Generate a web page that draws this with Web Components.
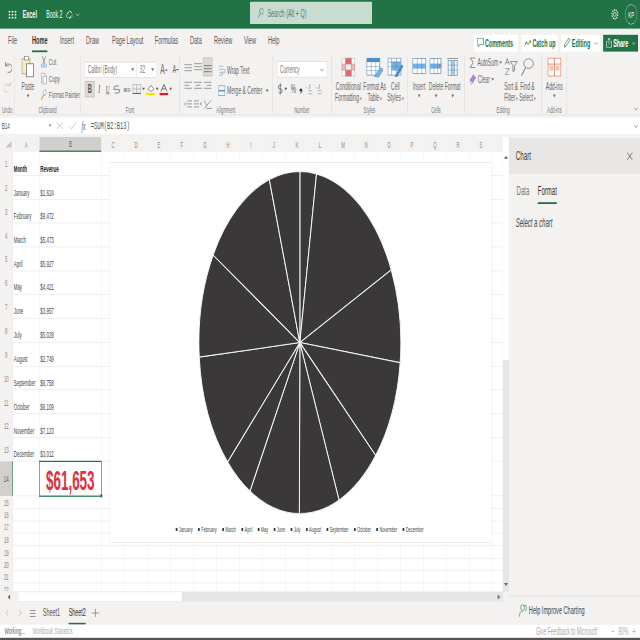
<!DOCTYPE html>
<html>
<head>
<meta charset="utf-8">
<title>Excel</title>
<style>
  html,body{margin:0;padding:0;overflow:hidden;background:#fff}
</style>
</head>
<body>
<excel-app></excel-app>
<script>
/* the reference is a 16:9 desktop squeezed into a square, so everything is
   laid out on a 2240x1067 sheet and squashed to 640x640 by excel-app.
   icons are drawn in final pixels: x-icon stretches them back */
const SX = 3.5, SY = 1.6667;
const GREEN = '#217346';

const ICONS = {
  waffle: '<g fill="#fff"><circle cx="1.5" cy="1.5" r=".9"/><circle cx="4.5" cy="1.5" r=".9"/><circle cx="7.5" cy="1.5" r=".9"/><circle cx="1.5" cy="4.5" r=".9"/><circle cx="4.5" cy="4.5" r=".9"/><circle cx="7.5" cy="4.5" r=".9"/><circle cx="1.5" cy="7.5" r=".9"/><circle cx="4.5" cy="7.5" r=".9"/><circle cx="7.5" cy="7.5" r=".9"/></g>',
  saved: '<path d="M2 8a2 2 0 0 1 .4-4A3 3 0 0 1 8 3.4 2.4 2.4 0 0 1 8 8" fill="none" stroke="#fff" stroke-width=".9"/><path d="M3.5 7.5l1.5 1.5 2.5-3" fill="none" stroke="#fff"/>',
  chev: '<path d="M1 2l2.5 2.5L6 2" fill="none" stroke="currentColor" stroke-width=".7"/>',
  tri: '<path d="M0 1h5L2.5 4z" fill="currentColor"/>',
  search: '<circle cx="7" cy="4.5" r="3.2" fill="none" stroke="#54715f" stroke-width=".8"/><path d="M4.7 7L1 11.5" stroke="#54715f" stroke-width=".8"/>',
  gear: '<circle cx="6" cy="6" r="2" fill="none" stroke="#fff" stroke-width=".8"/><circle cx="6" cy="6" r="4.4" fill="none" stroke="#fff" stroke-width="1.4" stroke-dasharray="1.7 1"/>',
  comment: '<path d="M.5.5h10v7H4l-2 2.5v-2.5H.5z" fill="none" stroke="#217346" stroke-width=".8"/>',
  catchup: '<path d="M1 7l2.5-4 1.5 3M6 6.5L9.5 2" fill="none" stroke="#217346" stroke-width="1"/><path d="M7.5 2h2.5v2.500" fill="none" stroke="#555" stroke-width=".7"/>',
  pencil: '<path d="M1 11l1-3.5L8 1l2 2-6 6.6z" fill="none" stroke="#217346" stroke-width=".8"/>',
  share: '<path d="M1 4.5h2M8 4.5h2v6.5H1V4.5M5.5 8V1M3.5 3l2-2 2 2" fill="none" stroke="#fff" stroke-width=".8"/>',
  undo: '<path d="M2 1v4h4M2 5a4.6 4.6 0 1 1 2.5 7" fill="none" stroke="#666" stroke-width=".9"/>',
  redo: '<path d="M8 1v4H4M8 5a4.6 4.6 0 1 0-2.5 7" fill="none" stroke="#c8c6c4" stroke-width=".9"/>',
  paste: '<rect x=".5" y="3" width="8" height="15" fill="#f6ead2" stroke="#c39a55" stroke-width=".8"/><rect x="3" y=".7" width="4" height="3.5" fill="#fff" stroke="#888" stroke-width=".7"/><rect x="5" y="8" width="7" height="13" fill="#fff" stroke="#777" stroke-width=".8"/>',
  cut: '<path d="M2 .5L6 8M7 .5L3 8" stroke="#666" stroke-width=".7" fill="none"/><circle cx="2" cy="10" r="1.7" fill="none" stroke="#5b94cf" stroke-width=".8"/><circle cx="7" cy="10" r="1.7" fill="none" stroke="#5b94cf" stroke-width=".8"/>',
  copy: '<path d="M.5 10.500V.5h5l2 2M3.500 11.500v-8h6v8z" fill="#fff" stroke="#777" stroke-width=".7"/>',
  painter: '<path d="M1 11L5 6" stroke="#c89a3b" stroke-width="1.4"/><path d="M4 3.500L8 .5l2.500 3.500-3.800 3z" fill="#fff" stroke="#888" stroke-width=".7"/>',
  strike: '<path d="M6 2H3a1.600 1.600 0 0 0 0 3.500h2A1.600 1.600 0 0 1 5 9H2" fill="none" stroke="#555" stroke-width=".7"/><path d="M0 5.500h8" stroke="#888" stroke-width=".6"/>',
  ab: '<circle cx="3" cy="6" r="2" fill="#888"/><circle cx="6.500" cy="6" r="2" fill="#aaa"/><path d="M0 6h9" stroke="#fff" stroke-width=".6"/>',
  border: '<path d="M.5 .5h8v9h-8zM4.500 .5v9M.5 5h8" fill="none" stroke="#a5a5a5" stroke-width=".7"/><path d="M.5 9.500h8" stroke="#444" stroke-width=".8"/>',
  fill: '<path d="M2 6l3-4 3 4-3 2z" fill="#fff" stroke="#666" stroke-width=".7"/><rect x="0" y="9.500" width="9" height="2.500" fill="#f2e500"/>',
  fcolor: '<path d="M1.500 8L4.500 1l3 7M2.600 5.500h3.800" fill="none" stroke="#555" stroke-width=".8"/><rect x="0" y="9.500" width="9" height="2.500" fill="#e01b24"/>',
  atop: '<path d="M0 3.500h8M0 6.500h8M0 9.500h8" stroke="#777" stroke-width=".7"/>',
  amid: '<path d="M0 2.500h8M0 5.500h8M0 8.500h8" stroke="#777" stroke-width=".7"/>',
  abot: '<path d="M0 4.500h8M0 7.500h8M0 10.500h8" stroke="#555" stroke-width=".7"/>',
  aleft: '<path d="M0 2.500h8M0 5.500h5M0 8.500h8" stroke="#777" stroke-width=".7"/>',
  acent: '<path d="M0 2.500h8M1.500 5.500h5M0 8.500h8" stroke="#777" stroke-width=".7"/>',
  aright: '<path d="M0 2.500h8M3 5.500h5M0 8.500h8" stroke="#777" stroke-width=".7"/>',
  iout: '<path d="M3 2.500h5M3 5.500h5M3 8.500h5M0 4l2 1.500L0 7" stroke="#777" stroke-width=".7" fill="none"/>',
  iin: '<path d="M0 2.500h5M0 5.500h5M0 8.500h5M8 4L6 5.500 8 7" stroke="#777" stroke-width=".7" fill="none"/>',
  orient: '<path d="M1 10L8 2M3 10h6" stroke="#777" stroke-width=".7" fill="none"/><path d="M1 2l3 6" stroke="#5b94cf" stroke-width=".7"/>',
  wrap: '<path d="M1 1.500h6M1 4.500h7a1.700 1.700 0 0 1 0 3.500H5M1 8h2M1 10.500h5" fill="none" stroke="#5b94cf" stroke-width=".7"/><path d="M6 6.500L4.500 8 6 9.500" fill="none" stroke="#666" stroke-width=".6"/>',
  merge: '<rect x=".5" y=".5" width="9" height="10" fill="none" stroke="#5b94cf" stroke-width=".8"/><path d="M.5 5.500h9" stroke="#5b94cf" stroke-width="1.400"/>',
  dollar: '<path d="M6 2.500H3.500a1.700 1.700 0 0 0 0 3.800h1.500a1.700 1.700 0 0 1 0 3.700H2M4.200 .5v11.500" fill="none" stroke="#555" stroke-width=".8"/>',
  comma: '<circle cx="2" cy="6" r="1.500" fill="#333"/><path d="M3 6.500C3 8.500 2 9 1 9.500" fill="none" stroke="#333"/>',
  incdec: '<path d="M5 1.500v4M3 5.500h2" stroke="#5b94cf" stroke-width=".7" fill="none"/><circle cx="1" cy="5" r=".5" fill="#666"/><path d="M3 8h5M8 11H3" stroke="#888" stroke-width=".7"/>',
  cond: '<g stroke="#9a9a9a" stroke-width=".5"><rect x=".5" y=".5" width="13" height="18" fill="#fff"/><rect x="4" y=".5" width="6" height="6" fill="#e6646a"/><rect x="4" y="6.500" width="6" height="6" fill="#ededed"/><rect x="4" y="12.500" width="6" height="6" fill="#e6646a"/><rect x=".5" y="6.500" width="3.500" height="6" fill="#f3b6b8"/><rect x="10" y="6.500" width="3.500" height="6" fill="#f3b6b8"/></g>',
  fmttable: '<rect x=".5" y=".5" width="13" height="17" fill="#fff" stroke="#5d8ab3" stroke-width=".7"/><rect x=".5" y=".5" width="13" height="4" fill="#4a8cc7"/><path d="M5 .5v17M9.500 .5v17M.5 9h13M.5 13h13" stroke="#5d8ab3" stroke-width=".5"/><path d="M8 19l6-9 3 2-5 8z" fill="#6fb0e6" stroke="#4a8cc7" stroke-width=".5"/>',
  cellstyles: '<rect x=".5" y=".5" width="13" height="17" fill="#fff" stroke="#5d8ab3" stroke-width=".7"/><rect x="4" y="4" width="9.500" height="9" fill="#6fb0e6"/><path d="M4 .5v17M9 .5v17M.5 4.500h13M.5 9h13" stroke="#5d8ab3" stroke-width=".5"/><path d="M7 19l7-12 2 1.500-6 11z" fill="#4a8cc7"/>',
  insert: '<rect x=".5" y="1" width="13" height="15" fill="#fff" stroke="#5d8ab3" stroke-width=".7"/><rect x=".5" y="6" width="13" height="5" fill="#6fb0e6"/><path d="M5 1v15M9.500 1v15" stroke="#5d8ab3" stroke-width=".5"/>',
  del: '<rect x=".5" y="1" width="11" height="15" fill="#fff" stroke="#5d8ab3" stroke-width=".7"/><rect x=".5" y="6" width="11" height="5" fill="#6fb0e6"/><path d="M4.500 1v15M8 1v15" stroke="#5d8ab3" stroke-width=".5"/><path d="M9 6l3.500 4M12.500 6L9 10" stroke="#d9534f" stroke-width=".8"/>',
  format: '<rect x="1" y="3" width="9" height="15" fill="#fff" stroke="#5d8ab3" stroke-width=".7"/><rect x="4" y="3" width="3.500" height="15" fill="#a9cdec"/><path d="M1 7.500h9M1 12.500h9M4 3v15M7.500 3v15" stroke="#5d8ab3" stroke-width=".5"/><path d="M0 .8h11" stroke="#666" stroke-width=".7"/>',
  sigma: '<path d="M6 1H.8l3 4.500-3 5H6" fill="none" stroke="#666" stroke-width=".7"/>',
  clear: '<path d="M1 6l4-5 3 3-4 5z" fill="#a98bd6" stroke="#7a5eb0" stroke-width=".5"/><path d="M1 6l3 3-1 1.500H2z" fill="#fff" stroke="#7a5eb0" stroke-width=".5"/>',
  sort: '<path d="M1 7L3 1l2 6M1.700 5h2.600M1 11h4l-4 6h4" fill="none" stroke="#666" stroke-width=".6"/><path d="M6 4h7l-2.700 4v5l-1.600 1V8z" fill="none" stroke="#666" stroke-width=".7"/>',
  find: '<circle cx="8" cy="6" r="4.800" fill="none" stroke="#666" stroke-width=".7"/><path d="M5 10L1 18" stroke="#666" stroke-width=".9"/>',
  addins: '<rect x=".5" y=".5" width="13" height="18" fill="#fff" stroke="#d97a58" stroke-width=".8"/><path d="M7 .5v18M.5 6.500h13" stroke="#d97a58" stroke-width=".8"/><rect x="2" y="8" width="3.800" height="5" fill="#f3c3ae"/><rect x="8.200" y="8" width="3.800" height="5" fill="#f3c3ae"/>',
  fxclose: '<path d="M1 1l6 7M7 1L1 8" stroke="#c4c2c0" stroke-width=".8"/>',
  fxok: '<path d="M1 5l2.500 3L8 1" fill="none" stroke="#c4c2c0" stroke-width=".8"/>',
  left: '<path d="M3 1L1 4l2 3" fill="none" stroke="#c4c2c0" stroke-width=".8"/>',
  right: '<path d="M1 1l2 3-2 3" fill="none" stroke="#c4c2c0" stroke-width=".8"/>',
  menu: '<path d="M0 1.500h6M0 4.500h6M0 7.500h6" stroke="#666" stroke-width=".7"/>',
  plus: '<path d="M4 0v8M0 4h8" stroke="#666" stroke-width=".6"/>',
  help: '<circle cx="6" cy="4" r="3" fill="none" stroke="#217346" stroke-width=".7"/><path d="M1 13c0-4 2-5.500 5-5.500M8 2h4v5h-2" fill="none" stroke="#217346" stroke-width=".7"/>',
  cross: '<path d="M1 1l5 7M6 1L1 8" stroke="#555" stroke-width=".7"/>',
  up: '<path d="M0 4l2-3 2 3z" fill="#666"/>',
  down: '<path d="M0 1l2 3 2-3z" fill="#666"/>',
  tleft: '<path d="M3 .5L.5 3 3 5.500z" fill="#666"/>',
  tright: '<path d="M.5 .5L3 3 .5 5.500z" fill="#666"/>',
  corner: '<path d="M7 0v7H0z" fill="#c8c6c4"/>'
};

class XIcon extends HTMLElement {
  connectedCallback() {
    const w = +this.getAttribute('w'), h = +this.getAttribute('h');
    // vw / vh: size the drawing was made at, when it is shown smaller
    const vw = this.getAttribute('vw') || w, vh = this.getAttribute('vh') || h;
    const root = this.shadowRoot || this.attachShadow({ mode: 'open' });
    root.innerHTML = `<style>:host{display:inline-flex;flex:none}svg{display:block}</style>
      <svg width="${w * SX}" height="${h * SY}" viewBox="0 0 ${vw} ${vh}" preserveAspectRatio="none">${ICONS[this.getAttribute('n')] || ''}</svg>`;
  }
}
customElements.define('x-icon', XIcon);

/* ---------- title bar ---------- */
class TitleBar extends HTMLElement {
  constructor() {
    super();
    this.attachShadow({ mode: 'open' }).innerHTML = `
      <style>
        :host{display:flex;align-items:center;height:48px;background:${GREEN};color:#fff;font-size:18px;position:relative}
        .waffle{margin-left:28px}
        .app{margin-left:20px;font-weight:700;font-size:19px}
        .doc{margin-left:33px}
        .saved{margin-left:14px}
        .chev{margin-left:10px;color:#cfe3d6}
        .search{position:absolute;left:875px;top:3px;width:427px;height:37px;background:#c8ddd0;border-radius:2px;
                display:flex;align-items:center;gap:14px;padding-left:26px;box-sizing:border-box;color:#5b7a68;font-size:19px}
        .right{margin-left:auto;display:flex;align-items:center;gap:22px;padding-right:10px}
        .kp{width:42px;height:34px;border-radius:50%;border:1px solid #cfe3d6;display:flex;align-items:center;justify-content:center;font-size:15px;box-sizing:border-box}
      </style>
      <x-icon class="waffle" n="waffle" w="9" h="9"></x-icon>
      <span class="app">Excel</span>
      <span class="doc">Book 2</span>
      <x-icon class="saved" n="saved" w="6" h="10" vw="9"></x-icon>
      <x-icon class="chev" n="chev" w="5" h="6" vw="7"></x-icon>
      <div class="search"><x-icon n="search" w="6" h="11" vw="10" vh="12"></x-icon><span>Search (Alt + Q)</span></div>
      <div class="right"><x-icon n="gear" w="8" h="12" vw="12"></x-icon><div class="kp">KP</div></div>`;
  }
}
customElements.define('title-bar', TitleBar);

/* ---------- tabs ---------- */
class RibbonTabs extends HTMLElement {
  constructor() {
    super();
    const tabs = [['File', 28], ['Home', 112], ['Insert', 210], ['Draw', 301], ['Page Layout', 392], ['Formulas', 542], ['Data', 665], ['Review', 749], ['View', 854], ['Help', 938]];
    this.attachShadow({ mode: 'open' }).innerHTML = `
      <style>
        :host{display:flex;align-items:center;height:40px;background:#f3f2f1;color:#555;font-size:19.5px;position:relative}
        .tab{position:absolute;top:8px;white-space:nowrap}
        .on{font-weight:700;color:#333}
        .on::after{content:"";position:absolute;left:0;right:0;top:28px;height:3px;background:${GREEN}}
        .btns{margin-left:auto;display:flex;gap:12px;padding-right:7px;padding-top:7px;height:28px}
        .btn{display:flex;align-items:center;gap:4px;background:#fff;color:${GREEN};font-size:19px;padding:0 10px;box-sizing:border-box;font-weight:700;white-space:nowrap}
        .btn.share{background:${GREEN};color:#fff}
        .btn x-icon[n=chev]{color:#888;margin-left:8px}
        .btn.share x-icon[n=chev]{color:#cfe3d6}
      </style>
      ${tabs.map(([t, x]) => `<span class="tab${t === 'Home' ? ' on' : ''}" style="left:${x}px">${t}</span>`).join('')}
      <div class="btns">
        <div class="btn" style="width:154px"><x-icon n="comment" w="7" h="10" vw="11" vh="11"></x-icon>Comments</div>
        <div class="btn" style="width:126px"><x-icon n="catchup" w="7" h="8" vw="11" vh="9"></x-icon>Catch up</div>
        <div class="btn" style="width:136px"><x-icon n="pencil" w="7" h="11" vw="11" vh="12"></x-icon>Editing<x-icon n="chev" w="5" h="6" vw="7"></x-icon></div>
        <div class="btn share" style="width:122px"><x-icon n="share" w="6" h="11" vw="11" vh="12"></x-icon>Share<x-icon n="chev" w="4" h="6" vw="7"></x-icon></div>
      </div>`;
  }
}
customElements.define('ribbon-tabs', RibbonTabs);

/* ---------- ribbon ---------- */
class RibbonGroup extends HTMLElement {
  constructor() {
    super();
    this.attachShadow({ mode: 'open' }).innerHTML = `
      <style>
        :host{display:flex;flex-direction:column;flex:none;box-sizing:border-box;border-right:2px solid #e1dfdd;margin:3px 0 0;position:relative}
        .body{flex:1;display:flex;min-height:0}
        .label{height:15px;line-height:13px;text-align:center;font-size:15px;color:#777}
      </style>
      <div class="body"><slot></slot></div>
      <div class="label"><slot name="label"></slot></div>`;
  }
}
customElements.define('ribbon-group', RibbonGroup);

class XRibbon extends HTMLElement {
  constructor() {
    super();
    const big = (n, w, h, lines, tw, chev) => `<div class="big" style="width:${tw}px">
        <x-icon n="${n}" w="${w}" h="${h}"></x-icon>
        ${lines.map(l => `<span>${l}</span>`).join('')}
        ${chev ? '<x-icon class="tri" n="tri" w="3" h="5" vw="5"></x-icon>' : ''}
      </div>`;
    const dd = '<small> ▾</small>';
    this.attachShadow({ mode: 'open' }).innerHTML = `
      <style>
        :host{display:flex;height:103px;background:#f3f2f1;color:#666;font-size:17.5px;box-shadow:0 1px 0 #e1dfdd}
        small{font-size:11px;color:#888}
        .col{display:flex;flex-direction:column}
        .row{display:flex;align-items:center;white-space:nowrap}
        .big{display:flex;flex-direction:column;align-items:center;line-height:18px;white-space:nowrap;padding-top:5px;flex:none}
        .big x-icon:first-child{margin-bottom:5px;height:34px}
        .tri{color:#777;margin-top:3px}
        .combo{height:27px;background:#fff;border:1px solid #d2d0ce;box-sizing:border-box;display:flex;align-items:center;justify-content:space-between;padding:0 9px;font-size:17px;color:#777}
        .combo x-icon{color:#777}
        .fontbtn{width:30px;height:27px;display:flex;align-items:center;justify-content:center;font-size:20px;color:#555;font-family:"Liberation Serif",serif}
        .sel{background:#dcdad8;border:1px solid #b5b3b1;box-sizing:border-box}
        .grid3{display:grid;grid-template-columns:repeat(3,34px);grid-auto-rows:31px;padding:5px 0 0 13px;align-items:center;justify-items:center}
      </style>

      <ribbon-group style="width:52px">
        <div class="col" style="gap:13px;padding:11px 0 0 14px">
          <x-icon n="undo" w="8" h="12" vw="10" vh="13"></x-icon>
          <x-icon n="redo" w="8" h="12" vw="10" vh="13"></x-icon>
        </div>
        <span slot="label">Undo</span>
      </ribbon-group>

      <ribbon-group style="width:231px">
        <div style="display:flex;padding-left:8px">
          <div class="big" style="width:76px;padding-top:2px">
            <x-icon n="paste" w="13" h="22" style="height:37px"></x-icon>
            <span>Paste</span>
            <x-icon class="tri" n="tri" w="3" h="5" vw="5"></x-icon>
          </div>
          <div class="col" style="gap:7.500px;padding:2px 0 0 7px;font-size:16.500px">
            <div class="row" style="gap:7px"><x-icon n="cut" w="6" h="12" vw="9"></x-icon>Cut</div>
            <div class="row" style="gap:7px"><x-icon n="copy" w="6" h="12" vw="10"></x-icon>Copy</div>
            <div class="row" style="gap:7px"><x-icon n="painter" w="6" h="12" vw="11"></x-icon>Format Painter</div>
          </div>
        </div>
        <span slot="label">Clipboard</span>
      </ribbon-group>

      <ribbon-group style="width:346px">
        <div class="col" style="gap:5px;padding:11px 0 0 14px">
          <div class="row">
            <div class="combo" style="width:182px"><span>Calibri (Body)</span><x-icon n="tri" w="3" h="5" vw="5"></x-icon></div>
            <div class="combo" style="width:70px"><span>32</span><x-icon n="tri" w="3" h="5" vw="5"></x-icon></div>
            <span style="font-size:24px;margin-left:12px">A</span><x-icon n="tri" w="3" h="3" vw="5" vh="5" style="transform:rotate(180deg)"></x-icon>
            <span style="font-size:19px;margin-left:16px">A</span><x-icon n="tri" w="3" h="3" vw="5" vh="5"></x-icon>
          </div>
          <div class="row">
            <div class="fontbtn sel" style="width:35px;font-weight:700;font-family:'Liberation Sans',sans-serif">B</div>
            <div class="fontbtn" style="font-style:italic">I</div>
            <div class="fontbtn" style="text-decoration:underline;font-size:19px">U</div>
            <x-icon n="strike" w="8" h="10" style="margin-left:3px"></x-icon>
            <x-icon n="ab" w="9" h="10" style="margin-left:5px"></x-icon>
            <x-icon n="border" w="9" h="10" style="margin-left:3px"></x-icon>
            <x-icon n="tri" w="3" h="4" vw="5" vh="5" style="margin-left:3px"></x-icon>
            <x-icon n="fill" w="9" h="12" style="margin-left:3px"></x-icon>
            <x-icon n="tri" w="3" h="4" vw="5" vh="5" style="margin-left:3px"></x-icon>
            <x-icon n="fcolor" w="9" h="12" style="margin-left:2px"></x-icon>
            <x-icon n="tri" w="3" h="4" vw="5" vh="5" style="margin-left:3px"></x-icon>
          </div>
        </div>
        <span slot="label">Font</span>
      </ribbon-group>

      <ribbon-group style="width:325px">
        <div class="grid3">
          <x-icon n="atop" w="8" h="11"></x-icon><x-icon n="amid" w="8" h="11"></x-icon>
          <div class="sel" style="width:34px;height:31px;display:flex;align-items:center;justify-content:center"><x-icon n="abot" w="8" h="12"></x-icon></div>
          <x-icon n="aleft" w="8" h="11"></x-icon><x-icon n="acent" w="8" h="11"></x-icon><x-icon n="aright" w="8" h="11"></x-icon>
          <x-icon n="iout" w="8" h="11"></x-icon><x-icon n="iin" w="8" h="11"></x-icon><x-icon n="orient" w="9" h="11"></x-icon>
        </div>
        <div class="col" style="gap:13px;padding:16px 0 0 20px">
          <div class="row" style="gap:6px"><x-icon n="wrap" w="7" h="12" vw="10"></x-icon>Wrap Text</div>
          <div class="row" style="gap:6px"><x-icon n="merge" w="7" h="11" vw="10"></x-icon>Merge &amp; Center<x-icon n="tri" w="3" h="4" vw="5" vh="5" style="margin-left:6px"></x-icon></div>
        </div>
        <span slot="label">Alignment</span>
      </ribbon-group>

      <ribbon-group style="width:207px">
        <div class="col" style="gap:7px;padding:11px 0 0 16px">
          <div class="combo" style="width:175px"><span>Currency</span><x-icon n="chev" w="5" h="6" vw="7"></x-icon></div>
          <div class="row" style="font-size:21px;color:#555">
            <x-icon n="dollar" w="6" h="12" vw="8"></x-icon><x-icon n="tri" w="3" h="4" vw="5" vh="5" style="margin-left:4px"></x-icon>
            <span style="margin-left:12px">%</span>
            <x-icon n="comma" w="4" h="10" style="margin-left:10px"></x-icon>
            <x-icon n="incdec" w="7" h="12" vw="9" style="margin-left:11px"></x-icon>
            <x-icon n="incdec" w="7" h="12" vw="9" style="margin-left:8px"></x-icon>
          </div>
        </div>
        <span slot="label">Number</span>
      </ribbon-group>

      <ribbon-group style="width:266px">
        <div style="display:flex;padding-left:8px">
          ${big('cond', 14, 19, ['Conditional', 'Formatting' + dd], 100)}
          ${big('fmttable', 17, 20, ['Format As', 'Table' + dd], 85)}
          ${big('cellstyles', 16, 20, ['Cell', 'Styles' + dd], 60)}
        </div>
        <span slot="label">Styles</span>
      </ribbon-group>

      <ribbon-group style="width:200px">
        <div style="display:flex;padding-left:10px">
          ${big('insert', 14, 17, ['Insert'], 60, 1)}
          ${big('del', 13, 17, ['Delete'], 58, 1)}
          ${big('format', 11, 19, ['Format'], 58, 1)}
        </div>
        <span slot="label">Cells</span>
      </ribbon-group>

      <ribbon-group style="width:270px">
        <div class="col" style="gap:7px;padding:3px 0 0 16px;width:118px;box-sizing:content-box">
          <div class="row" style="gap:4px"><x-icon n="sigma" w="7" h="12"></x-icon>AutoSum<x-icon n="tri" w="3" h="4" vw="5" vh="5"></x-icon></div>
          <div class="row" style="gap:5px"><x-icon n="clear" w="7" h="11" vw="9"></x-icon>Clear<x-icon n="tri" w="3" h="4" vw="5" vh="5"></x-icon></div>
        </div>
        <div style="display:flex">
          ${big('sort', 14, 18, ['Sort &amp;', 'Filter' + dd], 56)}
          ${big('find', 14, 19, ['Find &amp;', 'Select' + dd], 58)}
        </div>
        <span slot="label">Editing</span>
      </ribbon-group>

      <ribbon-group style="width:88px">
        <div style="display:flex;padding-left:14px">${big('addins', 14, 19, ['Add-ins'], 58, 1)}</div>
        <span slot="label">Add-ins</span>
      </ribbon-group>
      <x-icon n="chev" w="5" h="6" vw="7" style="margin:88px 0 0 auto;height:10px;padding-right:6px;color:#777"></x-icon>`;
  }
}
customElements.define('x-ribbon', XRibbon);

/* ---------- formula bar ---------- */
class FormulaBar extends HTMLElement {
  constructor() {
    super();
    this.attachShadow({ mode: 'open' }).innerHTML = `
      <style>
        :host{display:flex;align-items:center;height:27px;background:#fff;color:#555;margin:5px 0;font-size:16px}
        .name{width:170px;padding-left:6px;box-sizing:border-box}
        .fx{font-family:"Liberation Serif",serif;font-style:italic;font-size:20px;margin:0 18px 0 16px}
        .f{font-family:"Liberation Mono",monospace;font-size:19px}
      </style>
      <span class="name">B14</span>
      <x-icon n="tri" w="3" h="4" vw="5" vh="5" style="color:#888"></x-icon>
      <x-icon n="fxclose" w="8" h="9" style="margin-left:14px"></x-icon>
      <x-icon n="fxok" w="9" h="9" style="margin-left:15px"></x-icon>
      <span class="fx">fx</span>
      <span class="f">=SUM(B2:B13)</span>
      <x-icon n="chev" w="5" h="6" vw="7" style="margin-left:auto;padding-right:6px;color:#777"></x-icon>`;
  }
}
customElements.define('formula-bar', FormulaBar);

/* ---------- pie ---------- */
const DATA = [['January', 1624], ['February', 9472], ['March', 5473], ['April', 5927], ['May', 4421], ['June', 3957],
  ['July', 5028], ['August', 2749], ['September', 6758], ['October', 6109], ['November', 7123], ['December', 3012]];

class PieChart extends HTMLElement {
  constructor() {
    super();
    const rx = 101, ry = 171;
    const total = DATA.reduce((s, d) => s + d[1], 0);
    let cum = 0, paths = '';
    const pt = f => {
      const a = f * 2 * Math.PI;
      return (rx * Math.sin(a)).toFixed(2) + ' ' + (-ry * Math.cos(a)).toFixed(2);
    };
    for (const [, v] of DATA) {
      const from = cum / total;
      cum += v;
      const to = cum / total;
      paths += `<path d="M0 0L${pt(from)}A${rx} ${ry} 0 ${to - from > .5 ? 1 : 0} 1 ${pt(to)}Z"/>`;
    }
    this.attachShadow({ mode: 'open' }).innerHTML = `
      <style>
        :host{display:flex;flex-direction:column;align-items:center;background:#fff;box-shadow:0 0 0 1px #e3e1df;color:#444}
        svg{display:block;margin-top:15px;margin-left:-5px}
        .legend{display:flex;gap:19px;margin-top:19px;margin-left:-5px;font-size:13.5px;line-height:16px;white-space:nowrap}
        .legend span::before{content:"";display:inline-block;width:6px;height:5px;background:#3a3839;margin-right:5px;vertical-align:2px}
      </style>
      <svg width="${(rx * 2 * SX).toFixed(1)}" height="${(ry * 2 * SY).toFixed(1)}" viewBox="${-rx} ${-ry} ${rx * 2} ${ry * 2}" preserveAspectRatio="none">
        <g fill="#3a3839" stroke="#f4f4f4" stroke-width="1">${paths}</g>
      </svg>
      <div class="legend">${DATA.map(d => `<span>${d[0]}</span>`).join('')}</div>`;
  }
}
customElements.define('pie-chart', PieChart);

/* ---------- sheet ---------- */
class XSheet extends HTMLElement {
  constructor() {
    super();
    const cols = 'ABCDEFGHIJKLMNOPQRS'.split('').concat('');
    const rowH = r => r === 1 ? 40 : r <= 13 ? 39.7 : r === 14 ? 58 : 20.7;
    let html = '<div class="corner"><x-icon n="corner" w="7" h="7"></x-icon></div>';
    cols.forEach(c => html += `<div class="ch${c === 'B' ? ' sel' : ''}">${c}</div>`);
    for (let r = 1; r <= 22; r++) {
      html += `<div class="rh${r === 14 ? ' sel' : ''}">${r}</div>`;
      cols.forEach((c, i) => {
        let t = '', k = 'c';
        if (r === 1 && i < 2) { t = i ? 'Revenue' : 'Month'; k += ' b'; }
        else if (r > 1 && r <= 13 && i === 0) t = DATA[r - 2][0];
        else if (r > 1 && r <= 13 && i === 1) t = '$' + DATA[r - 2][1].toLocaleString('en-US');
        else if (r === 14 && i === 1) { t = '$61,653'; k += ' total'; }
        html += `<div class="${k}">${t}</div>`;
      });
    }
    const rows = Array.from({ length: 22 }, (_, i) => rowH(i + 1) + 'px').join(' ');
    this.attachShadow({ mode: 'open' }).innerHTML = `
      <style>
        :host{display:grid;grid-template-columns:1760px 21px;grid-template-rows:758px 17px;width:1781px;flex:none;color:#444}
        .area{position:relative;overflow:hidden;background:#fff}
        .grid{display:grid;grid-template-columns:45px 93px 217px repeat(18,80.5px);grid-template-rows:25px ${rows};font-size:15.5px}
        .corner,.ch,.rh{background:#f3f2f1;color:#888;display:flex;align-items:center;justify-content:center;box-sizing:border-box;font-size:15px}
        .corner{justify-content:flex-end;padding-right:4px}
        .rh{border-right:1px solid #dedcda}
        .ch.sel,.rh.sel{background:#d2d0ce;color:#555}
        .ch.sel{border-bottom:2px solid ${GREEN}}
        .rh.sel{border-right:2px solid ${GREEN}}
        .c{border-right:1px solid #e6e6e6;border-bottom:1px solid #e6e6e6;box-sizing:border-box;display:flex;align-items:flex-end;padding:0 0 2px 3px;white-space:nowrap;min-width:0}
        .b{font-weight:700;color:#222}
        .total{outline:2px solid ${GREEN};outline-offset:-1px;position:relative;justify-content:center;align-items:center;padding:3px 0 0;
               color:#e0303a;font-size:47px;font-weight:700}
        .total::after{content:"";position:absolute;right:-4px;bottom:-3px;width:7px;height:5px;background:${GREEN}}
        pie-chart{position:absolute;left:385px;top:43px;width:1333px;height:633px}
        .vbar{background:#e6e6e6;display:flex;flex-direction:column;align-items:center;position:relative}
        .vthumb{width:100%;height:372px;background:#fff;display:flex;justify-content:center;padding-top:30px;box-sizing:border-box}
        .vbar .dn{position:absolute;bottom:8px}
        .hbar{background:#e6e6e6;display:flex;align-items:center;position:relative}
        .harrow{width:63px;height:100%;background:#f3f2f1;display:flex;align-items:center;justify-content:center}
        .hthumb{width:574px;height:100%;background:#fff;box-sizing:border-box;border:1px solid #e6e6e6}
        .hbar .rt{position:absolute;right:6px}
        .cornerbox{background:#f3f2f1}
      </style>
      <div class="area">
        <div class="grid">${html}</div>
        <pie-chart></pie-chart>
      </div>
      <div class="vbar">
        <div class="vthumb"><x-icon n="up" w="4" h="5"></x-icon></div>
        <x-icon class="dn" n="down" w="4" h="5"></x-icon>
      </div>
      <div class="hbar">
        <div class="harrow"><x-icon n="tleft" w="4" h="6"></x-icon></div>
        <div class="hthumb"></div>
        <x-icon class="rt" n="tright" w="4" h="6"></x-icon>
      </div>
      <div class="cornerbox"></div>`;
  }
}
customElements.define('x-sheet', XSheet);

/* ---------- side pane ---------- */
class TaskPane extends HTMLElement {
  constructor() {
    super();
    this.attachShadow({ mode: 'open' }).innerHTML = `
      <style>
        :host{display:flex;flex-direction:column;flex:1;background:#f3f2f1;color:#444}
        header{height:60px;background:#e9e7e5;display:flex;align-items:center;justify-content:space-between;padding:0 24px;font-size:22px;flex:none;margin-top:2px}
        .tabs{display:flex;gap:30px;padding:16px 0 0 27px;font-size:21px;color:#777}
        .tabs span{padding-bottom:7px}
        .on{color:#333;border-bottom:3px solid ${GREEN}}
        .hint{font-style:italic;font-size:21px;padding:19px 0 0 24px;flex:1}
        footer{height:47px;margin-bottom:-38px;position:relative;border-top:2px solid #e6e4e2;display:flex;align-items:center;gap:7px;padding-left:35px;font-size:19.500px;background:#f3f2f1}
      </style>
      <header><span>Chart</span><x-icon n="cross" w="7" h="9"></x-icon></header>
      <div class="tabs"><span>Data</span><span class="on">Format</span></div>
      <div class="hint">Select a chart</div>
      <footer><x-icon n="help" w="8" h="14" vw="13"></x-icon><span>Help Improve Charting</span></footer>`;
  }
}
customElements.define('task-pane', TaskPane);

/* ---------- bottom ---------- */
class SheetTabs extends HTMLElement {
  constructor() {
    super();
    this.attachShadow({ mode: 'open' }).innerHTML = `
      <style>
        :host{display:flex;align-items:center;height:38px;background:#f3f2f1;color:#555;font-size:19px;width:1781px;box-sizing:border-box;padding-left:18px}
        span{height:38px;line-height:34px;box-sizing:border-box}
        .on{color:#333;border-bottom:3px solid ${GREEN};margin-left:30px}
      </style>
      <x-icon n="left" w="4" h="8"></x-icon>
      <x-icon n="right" w="4" h="8" style="margin-left:32px"></x-icon>
      <x-icon n="menu" w="6" h="9" style="margin-left:26px"></x-icon>
      <span style="margin-left:25px">Sheet1</span>
      <span class="on">Sheet2</span>
      <x-icon n="plus" w="8" h="8" style="margin-left:20px"></x-icon>`;
  }
}
customElements.define('sheet-tabs', SheetTabs);

class StatusBar extends HTMLElement {
  constructor() {
    super();
    this.attachShadow({ mode: 'open' }).innerHTML = `
      <style>
        :host{display:flex;align-items:center;height:22px;background:#fff;color:#aaa;font-size:16px;padding-left:16px;border-bottom:4px solid #555}
        .work{color:#666;margin-right:26px}
        .r{margin-left:auto;display:flex;gap:50px;padding-right:16px;font-size:17.500px}
      </style>
      <span class="work">Working...</span>
      <span>Workbook Statistics</span>
      <div class="r"><span>Give Feedback to Microsoft</span><span>&minus;&nbsp;&nbsp;&nbsp;90%&nbsp;&nbsp;&nbsp;+</span></div>`;
  }
}
customElements.define('status-bar', StatusBar);

/* ---------- shell ---------- */
class ExcelApp extends HTMLElement {
  constructor() {
    super();
    this.attachShadow({ mode: 'open' }).innerHTML = `
      <style>
        :host{display:block;width:640px;height:640px;overflow:hidden;font-family:"Liberation Sans",Arial,sans-serif}
        .squash{width:2240px;height:1067px;background:#f3f2f1;display:flex;flex-direction:column;transform-origin:0 0;transform:scale(.285714,.6)}
        .main{display:flex;height:775px}
      </style>
      <div class="squash">
        <title-bar></title-bar>
        <ribbon-tabs></ribbon-tabs>
        <x-ribbon></x-ribbon>
        <formula-bar></formula-bar>
        <div class="main"><x-sheet></x-sheet><task-pane></task-pane></div>
        <sheet-tabs></sheet-tabs>
        <status-bar></status-bar>
      </div>`;
  }
}
customElements.define('excel-app', ExcelApp);
</script>
</body>
</html>
